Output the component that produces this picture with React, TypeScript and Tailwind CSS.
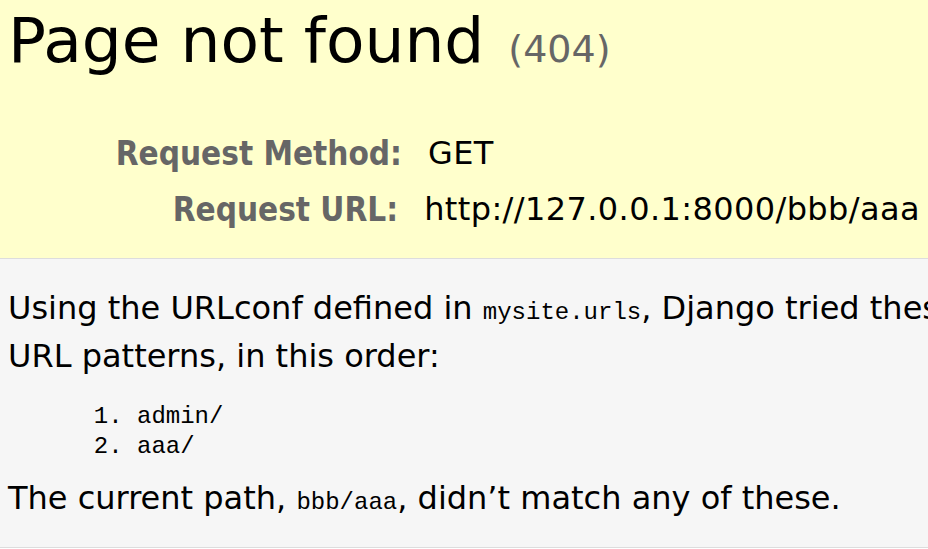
const sans = { fontFamily: '"DejaVu Sans", "Noto Sans CJK JP", sans-serif' };
const labelFont = { fontFamily: '"DejaVu Sans Condensed", "DejaVu Sans", sans-serif' };
const mono = { fontFamily: '"Liberation Mono", "DejaVu Sans Mono", monospace' };

const requestRows = [
  { label: 'Request Method:', value: 'GET' },
  { label: 'Request URL:', value: 'http://127.0.0.1:8000/bbb/aaa' },
];

export default function App() {
  return (
    <div className="w-[928px] h-[549px] overflow-hidden bg-white text-black whitespace-nowrap" style={sans}>
      {/* summary */}
      <div className="bg-[#ffffcc] border-b border-[#dddddd] h-[259px] px-2 pt-[3px]">
        <h1 className="text-[63px] font-normal leading-[76px]">
          Page not found <span className="ml-[4px] text-[#666666] text-[38px]">(404)</span>
        </h1>
        <div className="mt-[38px]">
          {requestRows.map((row) => (
            <div key={row.label} className="flex h-[56px] items-center">
              <div
                className="w-[394px] text-right text-[33px] font-bold text-[#666666] leading-none"
                style={labelFont}
              >
                {row.label}
              </div>
              <div className="ml-[26px] text-[32px] leading-none tracking-[0.4px]">{row.value}</div>
            </div>
          ))}
        </div>
      </div>

      {/* info */}
      <div className="bg-[#f6f6f6] border-b border-[#dddddd] h-[289px] px-2 pt-[25px]">
        <p className="text-[32px] leading-[48px]">
          Using the URLconf defined in{' '}
          <code className="text-[24px] leading-none" style={mono}>mysite.urls</code>, Django tried these
          <br />
          URL patterns, in this order:
        </p>
        <ol className="list-decimal pl-[129px] mt-[22px] text-[24px] leading-[30px]" style={mono}>
          <li>admin/</li>
          <li>aaa/</li>
        </ol>
        <p className="mt-[12px] text-[32px] leading-[48px]">
          The current path,{' '}
          <code className="text-[24px] leading-none" style={mono}>bbb/aaa</code>, didn’t match any of these.
        </p>
      </div>
    </div>
  );
}
